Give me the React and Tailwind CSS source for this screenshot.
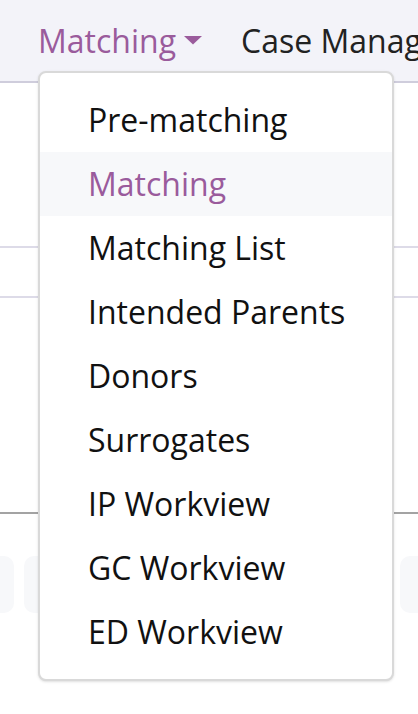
// App.jsx
const items = [
  "Pre-matching",
  "Matching",
  "Matching List",
  "Intended Parents",
  "Donors",
  "Surrogates",
  "IP Workview",
  "GC Workview",
  "ED Workview",
];

export default function App() {
  return (
    <div
      className="relative w-[418px] h-[714px] overflow-hidden bg-white"
      style={{ fontFamily: '"Open Sans", "Noto Sans", sans-serif' }}
    >
      {/* top nav */}
      <div className="h-[83px] bg-[#f3f3f9] border-b-2 border-[#cfcddc] flex items-center gap-[39px] pl-[38px] whitespace-nowrap">
        <div className="flex items-center gap-[8px] text-[32px] text-[#9a5b9c]">
          <span>Matching</span>
          <svg width="18" height="9" viewBox="0 0 18 9">
            <path d="M0 0 L18 0 L9 8.5 Z" fill="#9a5b9c" />
          </svg>
        </div>
        <span className="text-[32px] text-[#222]">Case Management</span>
      </div>

      {/* page content behind the menu */}
      <div className="h-[163px]" />
      <div className="h-[52px] border-y-2 border-[#dddbe8]" />
      <div className="h-[214px]" />
      <div className="h-[2px] bg-[#a3a3a3]" />
      <div className="h-[42px]" />
      <div className="flex gap-[10px] -ml-[40px]">
        <div className="w-[54px] h-[57px] shrink-0 rounded-[10px] bg-[#f7f8fa]" />
        <div className="w-[366px] h-[57px] shrink-0 rounded-[10px] bg-[#f7f8fa]" />
        <div className="w-[100px] h-[57px] shrink-0 rounded-[10px] bg-[#f7f8fa]" />
      </div>

      {/* dropdown menu */}
      <div className="absolute left-[38px] top-[71px] w-[356px] border-2 border-[#d9d9d9] rounded-[8px] bg-white py-[15px] shadow-sm">
        {items.map((item) => (
          <div
            key={item}
            className={
              item === "Matching"
                ? "h-[64px] flex items-center pl-[48px] text-[32px] text-[#9a5b9c] bg-[#f7f8fa]"
                : "h-[64px] flex items-center pl-[48px] text-[32px] text-[#111]"
            }
          >
            {item}
          </div>
        ))}
      </div>
    </div>
  );
}
